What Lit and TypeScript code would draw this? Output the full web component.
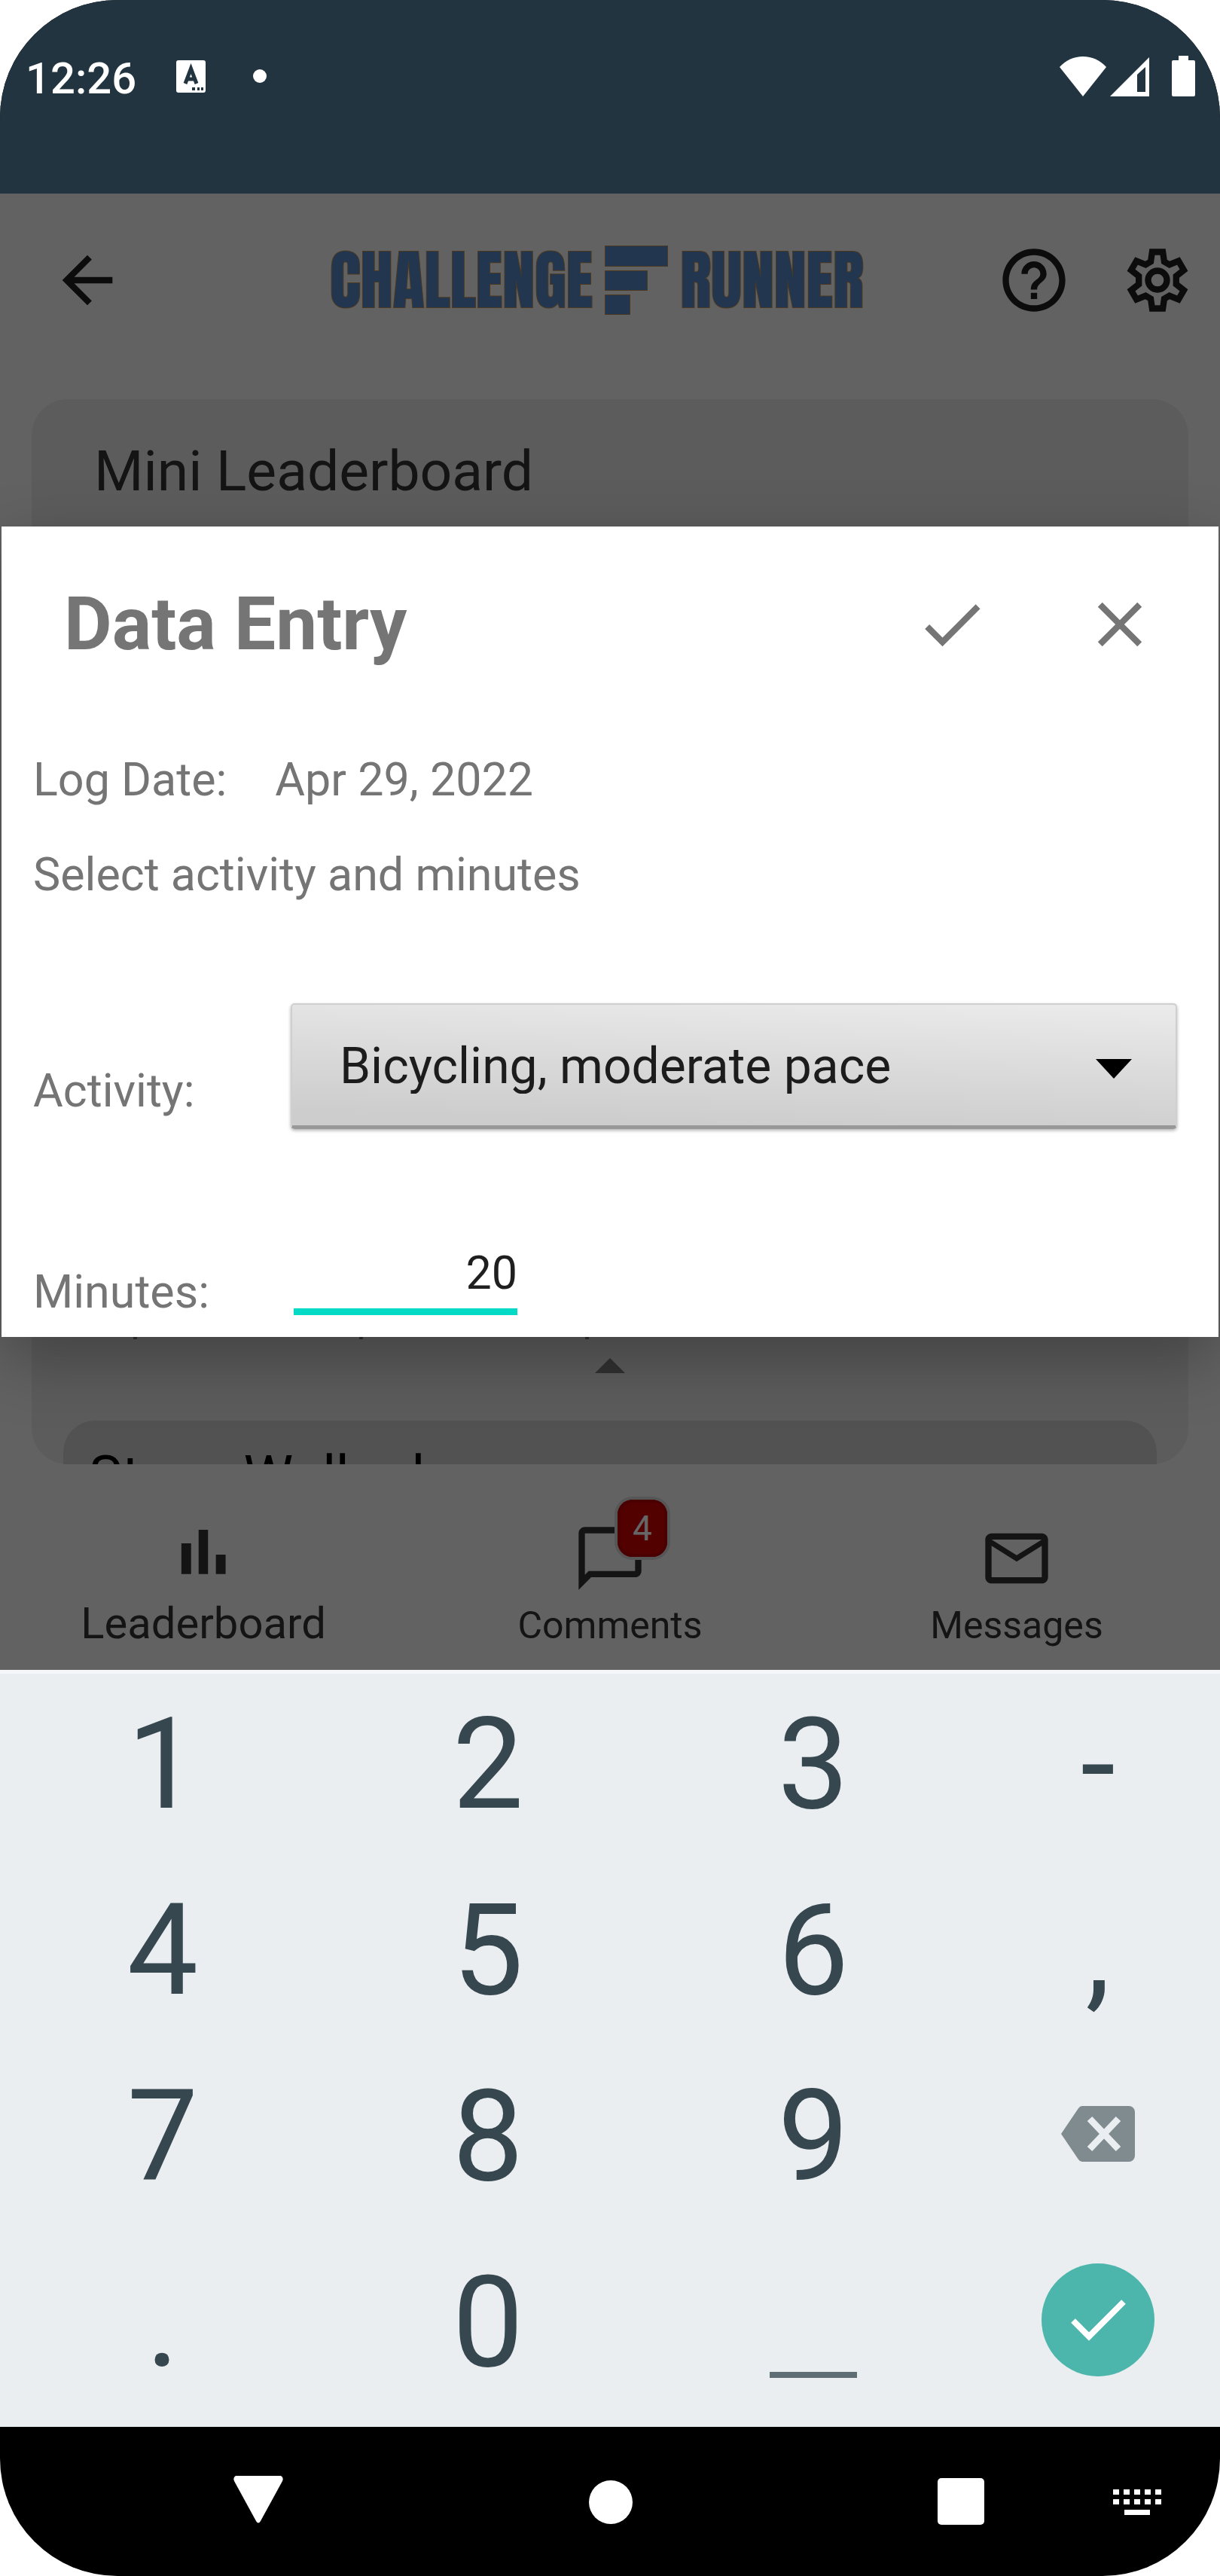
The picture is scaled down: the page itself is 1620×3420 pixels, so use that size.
import { LitElement, html, css, svg } from "lit";
import { customElement, state } from "lit/decorators.js";

const arrowBack = svg`<path d="M20 11H7.83l5.59-5.59L12 4l-8 8 8 8 1.41-1.41L7.83 13H20v-2z"/>`;
const help = svg`<path d="M11 18h2v-2h-2v2zm1-16C6.48 2 2 6.48 2 12s4.48 10 10 10 10-4.48 10-10S17.52 2 12 2zm0 18c-4.41 0-8-3.59-8-8s3.59-8 8-8 8 3.59 8 8-3.59 8-8 8zm0-14c-2.21 0-4 1.79-4 4h2c0-1.1.9-2 2-2s2 .9 2 2c0 2-3 1.75-3 5h2c0-2.25 3-2.5 3-5 0-2.21-1.79-4-4-4z"/>`;
const check = svg`<path d="M9 16.17L4.83 12l-1.42 1.41L9 19 21 7l-1.41-1.41z"/>`;
const close = svg`<path d="M19 6.41L17.59 5 12 10.59 6.41 5 5 6.41 10.59 12 5 17.59 6.41 19 12 13.41 17.59 19 19 17.59 13.41 12z"/>`;
const comment = svg`<path d="M4 2h16c1.1 0 2 .9 2 2v12c0 1.1-.9 2-2 2H6l-4 4V4c0-1.1.9-2 2-2zm0 15.2L5.2 16H20V4H4z"/>`;
const mail = svg`<path d="M22 6c0-1.1-.9-2-2-2H4c-1.1 0-2 .9-2 2v12c0 1.1.9 2 2 2h16c1.1 0 2-.9 2-2V6zm-2 0l-8 5-8-5h16zm0 12H4V8l8 5 8-5v10z"/>`;
const bars = svg`<path d="M5 7.2h3.1v9.8H5zM10.5 2.9h3V17h-3zM16 10.8h3.1V17H16z"/>`;
const gear = svg`
  <g fill="none" stroke="currentColor" stroke-width="2">
    <circle cx="12" cy="12" r="3"/>
    <path d="M10.3 3h3.4l.45 3.1 1.65.95 2.9-1.2 1.7 2.95-2.45 1.9v2.6l2.45 1.9-1.7 2.95-2.9-1.2-1.65.95L13.7 21h-3.4l-.45-3.1-1.65-.95-2.9 1.2-1.7-2.95 2.45-1.9v-2.6L3.6 8.8l1.7-2.95 2.9 1.2 1.65-.95z"/>
  </g>`;

const icon = (shape: unknown) =>
  html`<svg class="icon" viewBox="0 0 24 24" aria-hidden="true">${shape}</svg>`;

const backspace = html`<svg class="backspace" viewBox="0 0 98 74" aria-hidden="true">
  <path d="M28 0h62a8 8 0 0 1 8 8v58a8 8 0 0 1-8 8H28q-3 0-5-3L0 37 23 3q2-3 5-3z" fill="#808b90"/>
  <path d="M38 17l38 40M76 17L38 57" stroke="#eaeef1" stroke-width="9"/>
</svg>`;
const enter = html`<svg class="enter" viewBox="0 0 150 150" aria-hidden="true">
  <circle cx="75" cy="75" r="75" fill="#4cb6ac"/>
  <path d="M42 76l21 21 46-46" fill="none" stroke="#fff" stroke-width="8"/>
</svg>`;
const space = html`<svg class="space" viewBox="0 0 116 150" aria-hidden="true">
  <path d="M0 144h116v8H0z" fill="#5f6e74"/>
</svg>`;

const KEYS: { label: string; face: unknown }[] = [
  ..."123-456,789".split("").map((c) => ({ label: c, face: c })),
  { label: "Backspace", face: backspace },
  ...".0".split("").map((c) => ({ label: c, face: c })),
  { label: "Space", face: space },
  { label: "Done", face: enter },
];

@customElement("app-root")
export class AppRoot extends LitElement {
  @state() private minutes = "20";

  static styles = css`
    :host {
      display: block;
      background: #fff;
      font-family: Roboto, "Liberation Sans", sans-serif;
    }
    * { box-sizing: border-box; }
    button {
      border: 0;
      margin: 0;
      padding: 0;
      background: none;
      font: inherit;
      color: inherit;
    }
    svg { display: block; fill: currentColor; }
    h1, h2, p { margin: 0; }
    .icon { width: 100px; height: 100px; }

    .phone {
      display: flex;
      flex-direction: column;
      min-height: 100vh;
      border-radius: 156px;
      overflow: hidden;
      background: #000;
    }

    .status {
      display: flex;
      justify-content: space-between;
      height: 257px;
      padding: 68px 33px 0 34px;
      background: #223440;
      color: #fff;
    }
    .status-group { display: flex; align-items: center; height: 72px; }
    .clock { font-size: 58px; font-weight: 500; line-height: 72px; }
    .glyph { height: 60px; }
    .keyboard-app { width: 39px; margin-left: 53px; }
    .dot { width: 18px; margin-left: 63px; }
    .wifi { width: 62px; }
    .signal { width: 52px; margin-left: 5px; }
    .battery { width: 31px; margin-left: 30px; }

    .app {
      position: relative;
      display: flex;
      flex: 1;
      flex-direction: column;
      background: #f6f6f6;
      color: #323232;
    }
    .header {
      display: flex;
      align-items: center;
      height: 230px;
      padding: 0 33px 0 66px;
      color: #202020;
    }
    .logo {
      display: flex;
      flex: 1;
      align-items: center;
      justify-content: center;
      gap: 16px;
      padding-left: 96px;
      color: #5587c6;
      font-family: Impact, Anton, "Roboto Condensed", "Liberation Sans Narrow", sans-serif;
      font-size: 86px;
      font-weight: 400;
      line-height: 96px;
      -webkit-text-stroke: 2px #c08f50;
      paint-order: stroke fill;
    }
    .logo-mark { width: 84px; height: 92px; }
    .tools { display: flex; gap: 64px; }

    .card {
      display: flex;
      flex: 1;
      flex-direction: column;
      margin: 43px 42px 0;
      border-radius: 48px;
      overflow: hidden;
      background: #e5e5e5;
    }
    .card-title {
      padding: 51px 83px 0;
      font-size: 75px;
      font-weight: 400;
      line-height: 88px;
    }
    .chart { display: flex; flex: 1; align-items: flex-end; gap: 295px; padding-left: 135px; }
    .tick { width: 5px; height: 8px; background: #777; }
    .expand { width: 40px; height: 20px; margin: 25px auto 63px; color: #7a7a7a; }
    .teaser {
      height: 58px;
      margin: 0 42px;
      padding: 31px 34px 0;
      border-radius: 42px 42px 0 0;
      overflow: hidden;
      background: #cdcdcd;
      color: #000;
      font-size: 74px;
      line-height: 86px;
    }

    .tabs { display: grid; grid-template-columns: repeat(3, 1fr); height: 273px; }
    .tab {
      display: flex;
      flex-direction: column;
      align-items: center;
      gap: 10px;
      padding-top: 75px;
      font-size: 50px;
      line-height: 58px;
    }
    .tab.active { font-size: 58px; line-height: 52px; }
    .tab-icon { position: relative; }
    .badge {
      position: absolute;
      top: -28px;
      right: -26px;
      width: 66px;
      border-radius: 20px;
      background: #cd0000;
      box-shadow: inset 0 0 0 4px #b80000, 0 0 0 4px #d6d6d6;
      color: #fff;
      font-size: 46px;
      line-height: 76px;
      text-align: center;
    }

    .scrim {
      position: absolute;
      inset: 0;
      display: flex;
      flex-direction: column;
      justify-content: center;
      padding: 0 2px;
      background: rgba(0, 0, 0, 0.6);
      overflow: hidden;
    }
    .dialog {
      padding-bottom: 24px;
      background: #fff;
      box-shadow: 0 30px 80px rgba(0, 0, 0, 0.28);
      color: #757575;
      font-size: 61px;
      line-height: 72px;
    }
    .dialog-head { display: flex; align-items: center; height: 260px; padding: 0 81px 0 83px; }
    .dialog-title { flex: 1; font-size: 98px; font-weight: 700; line-height: 120px; }
    .actions { display: flex; gap: 123px; }
    .dialog-body {
      display: flex;
      flex-direction: column;
      gap: 54px;
      padding: 40px 55px 0 42px;
    }
    .log { display: flex; gap: 64px; }
    .form { margin-top: 81px; }
    .field { display: grid; grid-template-columns: 342px 1fr; align-items: end; }
    .field + .field { margin-top: 147px; }
    .select-label { padding-bottom: 15px; }
    .picker { position: relative; }
    select {
      appearance: none;
      display: block;
      width: 100%;
      height: 167px;
      padding: 4px 120px 0 63px;
      border: 2px solid #cfcfcf;
      border-bottom: 5px solid #989898;
      border-radius: 5px;
      outline: 0;
      background: linear-gradient(182deg, #ebebeb, #e4e4e4 20%, #d8d8d8 55%, #cdcdcd 90%);
      box-shadow: 0 2px 4px rgba(0, 0, 0, 0.3);
      color: #1c1c1c;
      font: inherit;
      font-size: 66px;
    }
    .caret {
      position: absolute;
      top: 74px;
      right: 60px;
      width: 48px;
      height: 26px;
      color: #000;
      pointer-events: none;
    }
    input {
      width: 297px;
      height: 100px;
      margin: 0 0 5px 4px;
      padding: 0 0 4px;
      border: 0;
      border-bottom: 9px solid #03dac5;
      border-radius: 0;
      outline: 0;
      background: none;
      color: #1f1f1f;
      font: inherit;
      text-align: right;
    }

    .keypad {
      display: grid;
      grid-template-columns: 4fr 4fr 4fr 3fr;
      grid-auto-rows: 247px;
      padding-bottom: 17px;
      background: #eaeef1;
      box-shadow: inset 0 5px #f5f6f9;
      color: #36474f;
      font-size: 168px;
      line-height: 200px;
    }
    .key { display: flex; align-items: center; justify-content: center; padding-top: 4px; }
    .key svg { margin-bottom: 8px; }
    .backspace { width: 98px; height: 74px; }
    .enter { width: 150px; height: 150px; }
    .space { width: 116px; height: 150px; overflow: visible; }

    .system {
      display: flex;
      align-items: center;
      justify-content: space-between;
      height: 198px;
      padding: 0 78px 0 310px;
      color: #fff;
    }
    .system-main { display: flex; flex: 1; justify-content: space-between; margin-right: 171px; }
    .soft { height: 64px; }
    .soft-back { width: 66px; }
    .soft-home { width: 58px; }
    .soft-recent { width: 62px; }
    .soft-ime { width: 64px; }
  `;

  render() {
    return html`
      <div class="phone">
        <div class="status">
          <div class="status-group">
            <span class="clock">12:26</span>
            <svg class="glyph keyboard-app" viewBox="0 0 39 60" aria-hidden="true">
              <rect y="6" width="39" height="43" rx="3"/>
              <path d="M12 37l7.500-20 7.500 20M15 31h9" fill="none" stroke="#223440" stroke-width="5"/>
              <path d="M21 42h4v4h-4zM28 42h3v4h-3zM33 42h3v4h-3z" fill="#223440"/>
            </svg>
            <svg class="glyph dot" viewBox="0 0 18 60" aria-hidden="true"><circle cx="9" cy="27" r="9"/></svg>
          </div>
          <div class="status-group">
            <svg class="glyph wifi" viewBox="0 0 62 60" aria-hidden="true"><path d="M31 54L0 15Q13 1 31 1t31 14z"/></svg>
            <svg class="glyph signal" viewBox="0 0 52 60" aria-hidden="true">
              <path fill-rule="evenodd" d="M52 2v52H0zM47 15L36 25v23h11z"/>
            </svg>
            <svg class="glyph battery" viewBox="0 0 31 60" aria-hidden="true">
              <path d="M9 0h13v6h7q2 0 2 2v44q0 2-2 2H2q-2 0-2-2V8q0-2 2-2h7z"/>
            </svg>
          </div>
        </div>

        <div class="app">
          <header class="header">
            <button aria-label="Back">${icon(arrowBack)}</button>
            <div class="logo">
              <span>CHALLENGE</span>
              <svg class="logo-mark" viewBox="0 0 84 92" aria-hidden="true">
                <g stroke="#c08f50" stroke-width="2">
                  <path d="M1 1h82v26H1zM1 34h55v25H1zM1 66h32v25H1z"/>
                </g>
              </svg>
              <span>RUNNER</span>
            </div>
            <div class="tools">
              <button aria-label="Help">${icon(help)}</button>
              <button aria-label="Settings">${icon(gear)}</button>
            </div>
          </header>

          <section class="card">
            <h2 class="card-title">Mini Leaderboard</h2>
            <div class="chart">
              <span class="tick"></span><span class="tick"></span><span class="tick"></span>
            </div>
            <svg class="expand" viewBox="0 0 40 20" aria-hidden="true"><path d="M20 0l20 20H0z"/></svg>
            <div class="teaser">Steps Walked</div>
          </section>

          <nav class="tabs">
            <button class="tab active">${icon(bars)}<span>Leaderboard</span></button>
            <button class="tab">
              <span class="tab-icon">${icon(comment)}<span class="badge">4</span></span>
              <span>Comments</span>
            </button>
            <button class="tab">${icon(mail)}<span>Messages</span></button>
          </nav>

          <div class="scrim">
            <div class="dialog" role="dialog" aria-labelledby="title">
              <div class="dialog-head">
                <h1 class="dialog-title" id="title">Data Entry</h1>
                <div class="actions">
                  <button aria-label="Save">${icon(check)}</button>
                  <button aria-label="Close">${icon(close)}</button>
                </div>
              </div>
              <div class="dialog-body">
                <div class="log"><span>Log Date:</span><span>Apr 29, 2022</span></div>
                <p>Select activity and minutes</p>
                <div class="form">
                  <div class="field">
                    <label class="select-label" for="activity">Activity:</label>
                    <div class="picker">
                      <select id="activity">
                        <option>Bicycling, moderate pace</option>
                      </select>
                      <svg class="caret" viewBox="0 0 48 26" aria-hidden="true"><path d="M0 0h48L24 26z"/></svg>
                    </div>
                  </div>
                  <div class="field">
                    <label for="minutes">Minutes:</label>
                    <input
                      id="minutes"
                      inputmode="numeric"
                      .value=${this.minutes}
                      @input=${(e: Event) => (this.minutes = (e.target as HTMLInputElement).value)}
                    />
                  </div>
                </div>
              </div>
            </div>
          </div>
        </div>

        <div class="keypad">
          ${KEYS.map((k) => html`<button class="key" aria-label=${k.label} @click=${() => this.press(k.label)}>${k.face}</button>`)}
        </div>

        <div class="system">
          <div class="system-main">
            <button aria-label="Hide keyboard">
              <svg class="soft soft-back" viewBox="0 2 66 64" overflow="visible"><path d="M3 0h60q4 2 2 7L36 60q-3 5-6 0L1 7Q-1 2 3 0z"/></svg>
            </button>
            <button aria-label="Home">
              <svg class="soft soft-home" viewBox="0 0 58 64"><circle cx="29" cy="33" r="29"/></svg>
            </button>
            <button aria-label="Recent apps">
              <svg class="soft soft-recent" viewBox="0 0 62 64"><rect y="1" width="62" height="62" rx="5"/></svg>
            </button>
          </div>
          <button aria-label="Switch keyboard">
            <svg class="soft soft-ime" viewBox="0 0 64 64">
              ${[0, 14, 28, 42, 56].map((x) => svg`<path d="M${x} 16h8v7h-8zM${x} 29h8v7h-8z"/>`)}
              <path d="M15 43h34v7H15z"/>
            </svg>
          </button>
        </div>
      </div>
    `;
  }

  private press(label: string) {
    if (label === "Backspace") this.minutes = this.minutes.slice(0, -1);
    else if (/^[\d.,-]$/.test(label)) this.minutes += label;
  }
}
